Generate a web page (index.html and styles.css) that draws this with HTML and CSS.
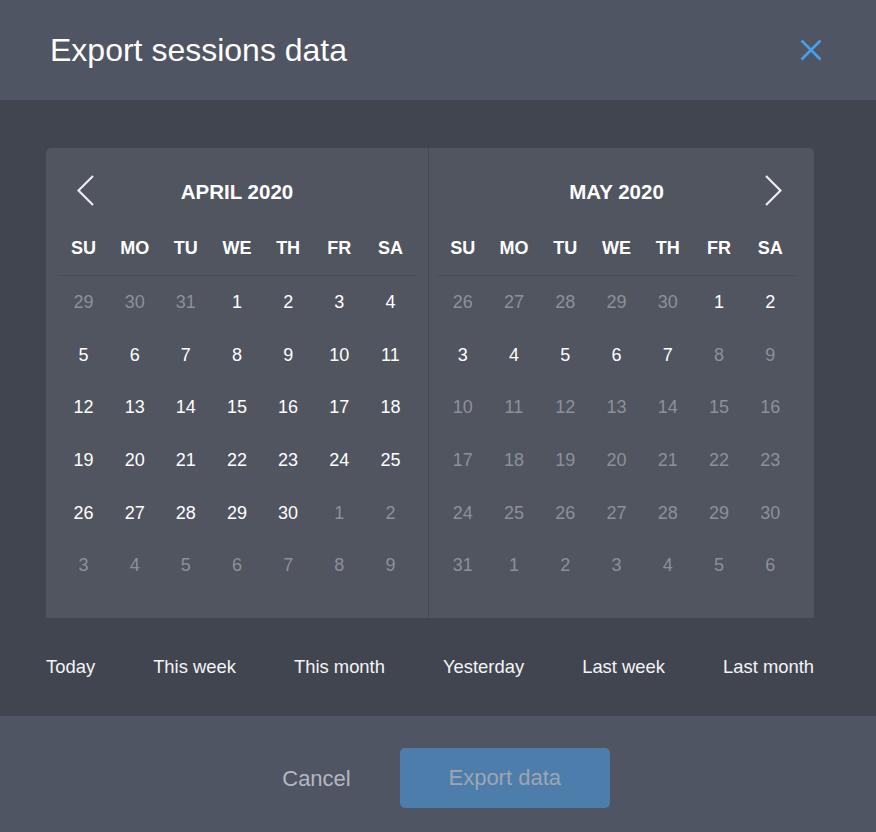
FILE: index.html
```html
<!DOCTYPE html>
<html lang="en">
<head>
<meta charset="utf-8">
<title>Export sessions data</title>
<link rel="stylesheet" href="styles.css">
</head>
<body>
<div class="dialog">
  <header class="dialog-header">
    <h1 class="dialog-title">Export sessions data</h1>
    <button class="close-btn" aria-label="Close">
      <svg width="22" height="22" viewBox="0 0 22 22"><path d="M1.5 1.5 L20.5 20.5 M20.5 1.5 L1.5 20.5" stroke="#4a9fec" stroke-width="2.6" fill="none" stroke-linecap="butt"/></svg>
    </button>
  </header>

  <main class="dialog-body">
    <div class="calendar">
      <section class="month month-left">
        <div class="month-head">
          <span class="nav nav-prev">
            <svg width="17" height="31" viewBox="0 0 17 31"><polyline points="16,1 1.5,15.5 16,30" stroke="#ebecee" stroke-width="2.2" fill="none"/></svg>
          </span>
          <span class="month-title">APRIL 2020</span>
          <span class="nav-spacer"></span>
        </div>
        <div class="dow">
          <span>SU</span><span>MO</span><span>TU</span><span>WE</span><span>TH</span><span>FR</span><span>SA</span>
        </div>
        <div class="days">
          <span class="out">29</span><span class="out">30</span><span class="out">31</span><span>1</span><span>2</span><span>3</span><span>4</span>
          <span>5</span><span>6</span><span>7</span><span>8</span><span>9</span><span>10</span><span>11</span>
          <span>12</span><span>13</span><span>14</span><span>15</span><span>16</span><span>17</span><span>18</span>
          <span>19</span><span>20</span><span>21</span><span>22</span><span>23</span><span>24</span><span>25</span>
          <span>26</span><span>27</span><span>28</span><span>29</span><span>30</span><span class="out">1</span><span class="out">2</span>
          <span class="out">3</span><span class="out">4</span><span class="out">5</span><span class="out">6</span><span class="out">7</span><span class="out">8</span><span class="out">9</span>
        </div>
      </section>
      <section class="month month-right">
        <div class="month-head">
          <span class="nav-spacer"></span>
          <span class="month-title">MAY 2020</span>
          <span class="nav nav-next">
            <svg width="17" height="31" viewBox="0 0 17 31"><polyline points="1,1 15.5,15.5 1,30" stroke="#ebecee" stroke-width="2.2" fill="none"/></svg>
          </span>
        </div>
        <div class="dow">
          <span>SU</span><span>MO</span><span>TU</span><span>WE</span><span>TH</span><span>FR</span><span>SA</span>
        </div>
        <div class="days">
          <span class="out">26</span><span class="out">27</span><span class="out">28</span><span class="out">29</span><span class="out">30</span><span>1</span><span>2</span>
          <span>3</span><span>4</span><span>5</span><span>6</span><span>7</span><span class="out">8</span><span class="out">9</span>
          <span class="out">10</span><span class="out">11</span><span class="out">12</span><span class="out">13</span><span class="out">14</span><span class="out">15</span><span class="out">16</span>
          <span class="out">17</span><span class="out">18</span><span class="out">19</span><span class="out">20</span><span class="out">21</span><span class="out">22</span><span class="out">23</span>
          <span class="out">24</span><span class="out">25</span><span class="out">26</span><span class="out">27</span><span class="out">28</span><span class="out">29</span><span class="out">30</span>
          <span class="out">31</span><span class="out">1</span><span class="out">2</span><span class="out">3</span><span class="out">4</span><span class="out">5</span><span class="out">6</span>
        </div>
      </section>
    </div>

    <nav class="presets">
      <span>Today</span>
      <span>This week</span>
      <span>This month</span>
      <span>Yesterday</span>
      <span>Last week</span>
      <span>Last month</span>
    </nav>
  </main>

  <footer class="dialog-footer">
    <button class="btn-cancel">Cancel</button>
    <button class="btn-export">Export data</button>
  </footer>
</div>
</body>
</html>
```

FILE: styles.css
```css
html, body {
  margin: 0;
  padding: 0;
}

body {
  width: 876px;
  height: 832px;
  overflow: hidden;
  background: #40454f;
  font-family: "Liberation Sans", Arial, Helvetica, sans-serif;
  color: #ffffff;
}

.dialog {
  display: flex;
  flex-direction: column;
  width: 876px;
  height: 832px;
}

.dialog-header {
  height: 100px;
  flex: none;
  background: #4f5562;
  display: flex;
  align-items: center;
  justify-content: space-between;
  padding: 0 54px 0 50px;
  box-sizing: border-box;
}

.dialog-title {
  margin: 0;
  font-size: 32px;
  font-weight: normal;
  line-height: 32px;
  color: #ffffff;
}

.close-btn {
  background: none;
  border: 0;
  padding: 0;
  width: 22px;
  height: 22px;
  display: block;
  cursor: pointer;
}

.close-btn svg {
  display: block;
}

.dialog-body {
  flex: none;
  height: 616px;
  box-sizing: border-box;
  padding: 48px 62px 0 46px;
  display: flex;
  flex-direction: column;
}

.calendar {
  display: flex;
  width: 768px;
  height: 470px;
  background: #50555f;
  border-radius: 5px 5px 0 0;
}

.month {
  box-sizing: border-box;
  padding-top: 24px;
}

.month-left {
  width: 383px;
  padding-left: 12px;
  padding-right: 12px;
  border-right: 1px solid #444953;
}

.month-right {
  width: 385px;
  padding-left: 8px;
  padding-right: 18px;
}

.month-head {
  height: 36px;
  display: grid;
  grid-template-columns: 1fr auto 1fr;
  align-items: center;
}

.month-title {
  font-size: 20.5px;
  font-weight: bold;
  line-height: 32px;
  padding-top: 4px;
  text-align: center;
}

.nav {
  display: flex;
  height: 31px;
}

.nav svg {
  display: block;
}

.nav-prev {
  justify-self: start;
  margin-left: 19px;
}

.nav-next {
  justify-self: end;
  margin-right: 14px;
}

.dow {
  margin-top: 13px;
  height: 54px;
  display: grid;
  grid-template-columns: repeat(7, 1fr);
  align-items: center;
  border-bottom: 1px solid #474c56;
  font-size: 18px;
  font-weight: bold;
  text-align: center;
}

.days {
  display: grid;
  grid-template-columns: repeat(7, 1fr);
  grid-auto-rows: 52.7px;
  align-items: center;
  text-align: center;
  font-size: 18px;
  color: #ffffff;
}

.days .out {
  color: #8c9199;
}

.presets {
  height: 98px;
  width: 768px;
  display: flex;
  justify-content: space-between;
  align-items: center;
  font-size: 18.4px;
  color: #f4f4f5;
}

.dialog-footer {
  flex: 1;
  background: #4f5562;
  display: flex;
  justify-content: center;
  align-items: flex-start;
  gap: 33px;
  padding-top: 32px;
  box-sizing: border-box;
}

.btn-cancel {
  background: none;
  border: 0;
  font-family: inherit;
  font-size: 22px;
  color: #b3b8c0;
  padding: 0 16px;
  height: 61px;
  cursor: pointer;
}

.btn-export {
  width: 210px;
  height: 60px;
  border: 0;
  border-radius: 5px;
  background: #4c7dab;
  color: #9ea6b0;
  font-family: inherit;
  font-size: 22px;
  padding-top: 1px;
  cursor: pointer;
}
```
